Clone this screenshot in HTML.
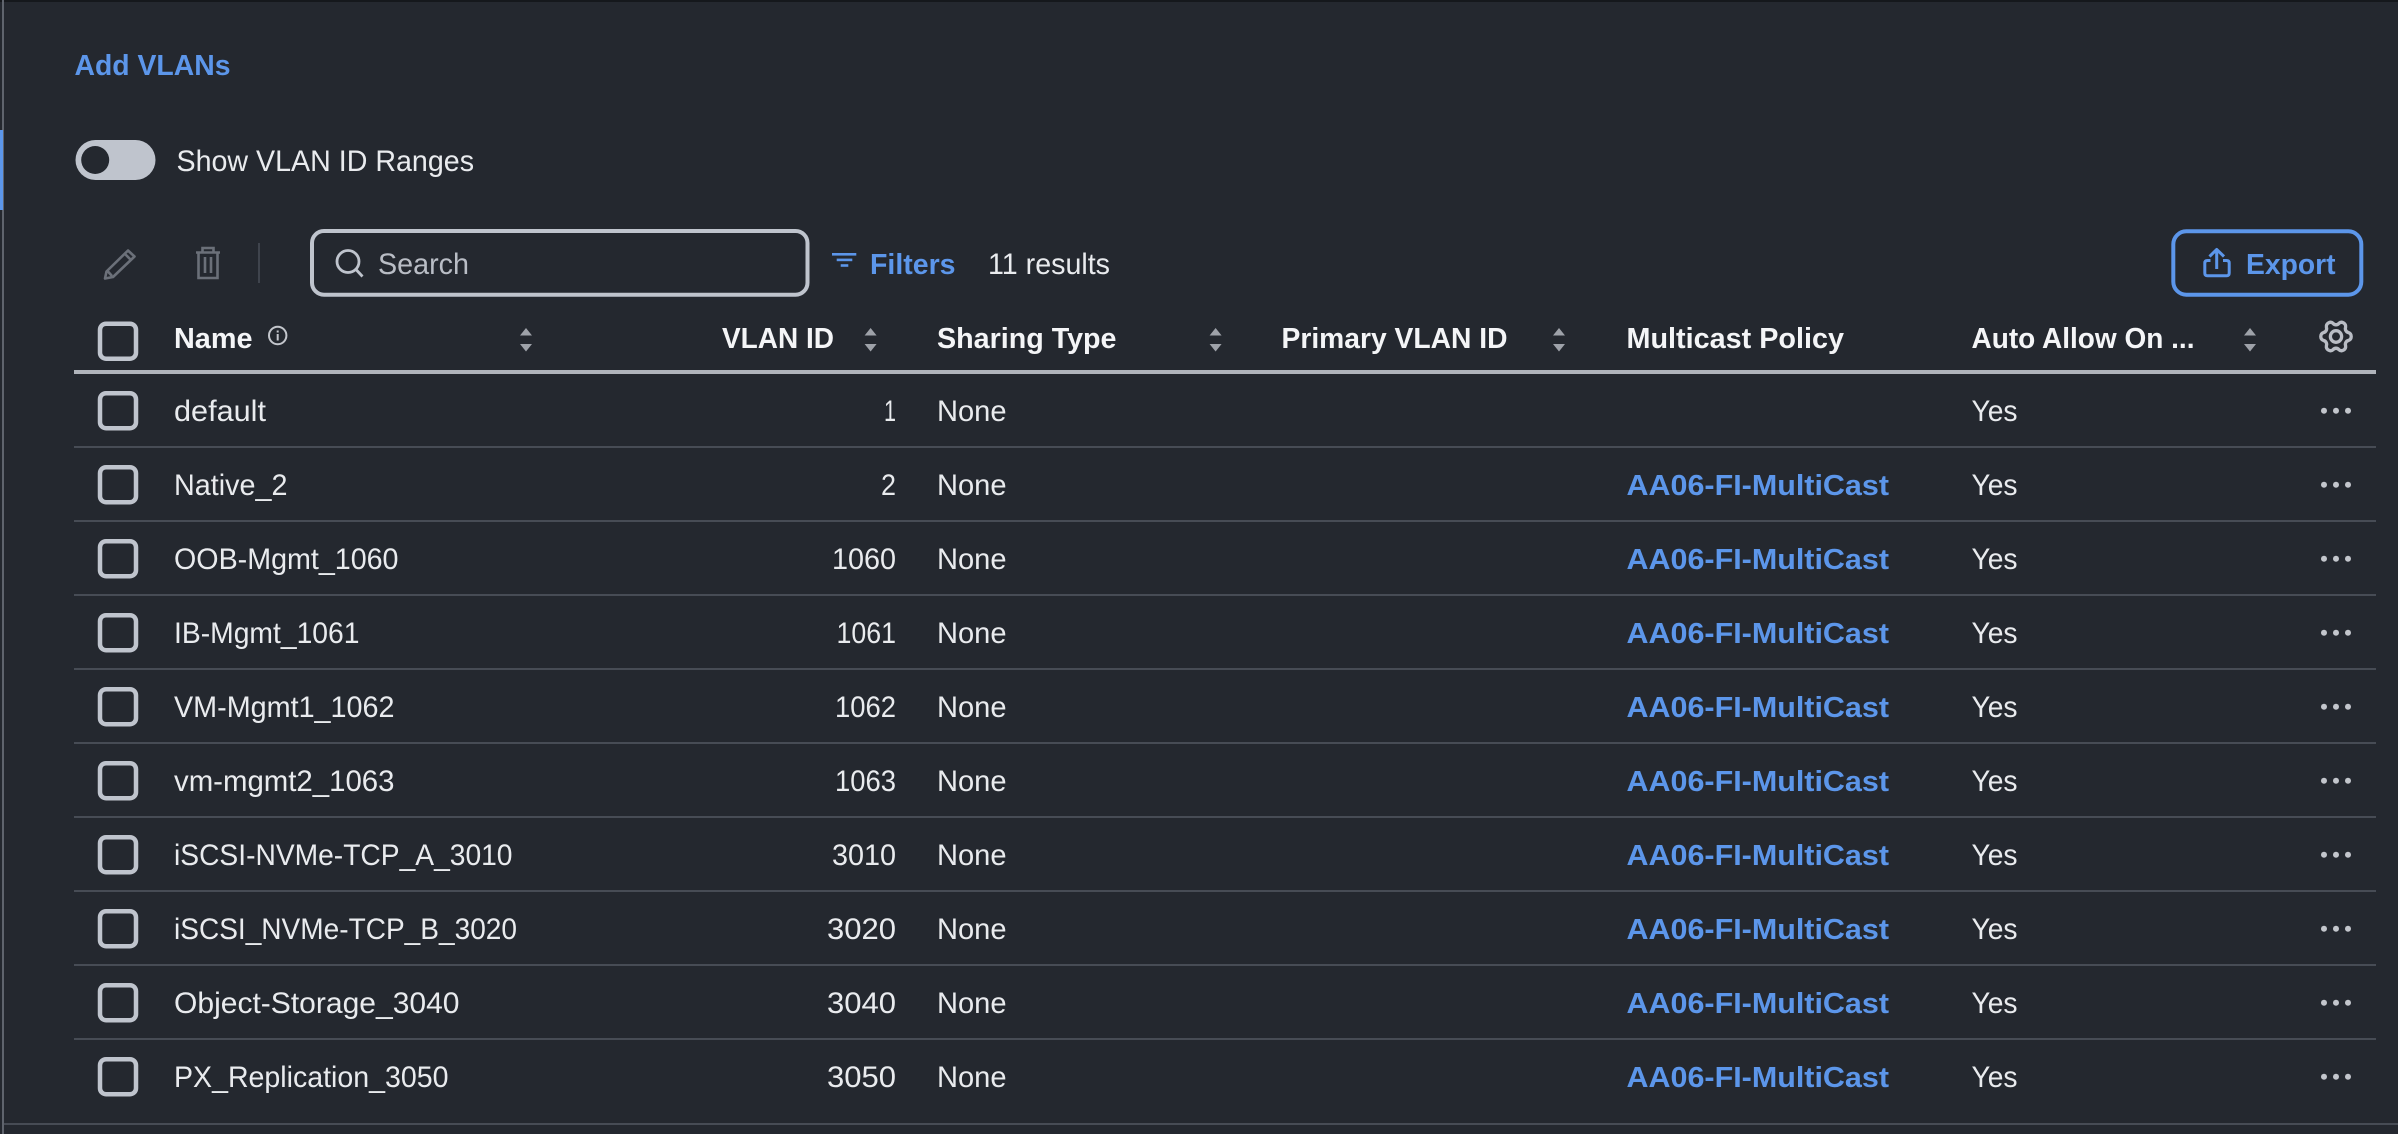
<!DOCTYPE html>
<html><head><meta charset="utf-8"><title>Add VLANs</title>
<style>
html,body{margin:0;padding:0;background:#24282f;width:2398px;height:1134px;overflow:hidden}
svg{display:block}
text{font-family:"Liberation Sans",sans-serif;white-space:pre}
.r{font-size:29.5px;fill:#e9ebee}
.h{font-size:29px;font-weight:700;fill:#f4f5f7}
.l{font-size:29px;font-weight:700;fill:#5c96ea}
.s{fill:#9ea2a9}
.c{fill:none;stroke:#bfc4cd;stroke-width:4.5px}
.sep{fill:#474c55}
</style></head><body>
<svg xmlns="http://www.w3.org/2000/svg" width="2398" height="1134" viewBox="0 0 2398 1134">
<defs>
<g id="sort"><path class="s" d="M-6 -1.5L0 -9L6 -1.5Z"/><path class="s" d="M-6 7L0 14.5L6 7Z"/></g>
<rect id="cb" class="c" x="-18" y="-17.5" width="36" height="35" rx="6"/>
<g id="dots"><circle cx="-12" cy="0" r="3" fill="#c3c6cc"/><circle cx="0" cy="0" r="3" fill="#c3c6cc"/><circle cx="12" cy="0" r="3" fill="#c3c6cc"/></g>
</defs>
<rect width="2398" height="1134" fill="#24282f"/>
<rect width="2398" height="2" fill="#15181c"/>
<rect x="2" y="0" width="2" height="1134" fill="#5f646d"/>
<rect x="0" y="130" width="3" height="80" fill="#5c96ea"/>
<rect x="4" y="1123" width="2394" height="2" fill="#474c55"/>

<text x="74.5" y="75" class="l" textLength="156" lengthAdjust="spacingAndGlyphs">Add VLANs</text>

<rect x="75.5" y="140" width="80" height="40" rx="20" fill="#bfc4cd"/>
<circle cx="95.2" cy="160" r="14" fill="#24282f"/>
<text x="176.5" y="171" class="r" textLength="297.5" lengthAdjust="spacingAndGlyphs">Show VLAN ID Ranges</text>

<!-- pencil -->
<g fill="none" stroke="#6b7079" stroke-width="2.6" stroke-linejoin="round">
<path d="M128 250.5L134.5 256.5L113 277L105 278.5L106.5 271.5Z"/>
<path d="M125 254L131 260M107.5 271L112 276"/>
</g>
<!-- trash -->
<g fill="none" stroke="#6b7079" stroke-width="2.6">
<path d="M196 252.5H220M202.5 252.5V248H213.5V252.5"/>
<path d="M198.5 253V278H217.5V253"/>
<path d="M205 257V273M211 257V273"/>
</g>
<rect x="258" y="243" width="2" height="40" fill="#3f444d"/>

<rect x="312" y="231" width="495.5" height="63.7" rx="12" fill="none" stroke="#bfc4cd" stroke-width="4"/>
<circle cx="348" cy="261.5" r="11" fill="none" stroke="#bfc4cd" stroke-width="2.8"/>
<path d="M356 269.5L362.5 276.5" stroke="#bfc4cd" stroke-width="2.8" fill="none"/>
<text x="378" y="274" font-size="29.5" fill="#b9bdc5" textLength="91" lengthAdjust="spacingAndGlyphs">Search</text>

<rect x="832" y="253" width="24.3" height="2.6" fill="#5c96ea"/>
<rect x="836.7" y="258.6" width="15.6" height="2.6" fill="#5c96ea"/>
<rect x="840.7" y="264.2" width="7.6" height="2.6" fill="#5c96ea"/>
<text x="870" y="274" class="l" textLength="85.5" lengthAdjust="spacingAndGlyphs">Filters</text>
<text x="988" y="274" class="r" textLength="122" lengthAdjust="spacingAndGlyphs">11 results</text>

<rect x="2173.3" y="231.3" width="188" height="63.4" rx="13" fill="none" stroke="#5c96ea" stroke-width="4"/>
<g fill="none" stroke="#5c96ea" stroke-width="3" stroke-linejoin="round">
<path d="M2210.5 260.5H2207.5Q2204.8 260.5 2204.8 263V273Q2204.8 275.8 2207.5 275.8H2226.5Q2229.2 275.8 2229.2 273V263Q2229.2 260.5 2226.5 260.5H2223"/>
<path d="M2216.7 269V250M2209.5 256.5L2216.7 249.5L2224 256.5"/>
</g>
<text x="2246" y="274" class="l" textLength="89.5" lengthAdjust="spacingAndGlyphs">Export</text>

<!-- header -->
<use href="#cb" x="118" y="341.2"/>
<text x="174" y="348" class="h" textLength="78.5" lengthAdjust="spacingAndGlyphs">Name</text>
<circle cx="277.7" cy="335.5" r="8.7" fill="none" stroke="#c3c6cc" stroke-width="2"/>
<rect x="276.7" y="334" width="2" height="6.5" fill="#c3c6cc"/><rect x="276.7" y="330.5" width="2" height="2" fill="#c3c6cc"/>
<use href="#sort" x="526" y="337"/>
<text x="722" y="348" class="h" textLength="112" lengthAdjust="spacingAndGlyphs">VLAN ID</text>
<use href="#sort" x="870.6" y="337"/>
<text x="937" y="348" class="h" textLength="179.5" lengthAdjust="spacingAndGlyphs">Sharing Type</text>
<use href="#sort" x="1215.6" y="337"/>
<text x="1281.5" y="348" class="h" textLength="226" lengthAdjust="spacingAndGlyphs">Primary VLAN ID</text>
<use href="#sort" x="1559" y="337"/>
<text x="1626.5" y="348" class="h" textLength="217.5" lengthAdjust="spacingAndGlyphs">Multicast Policy</text>
<text x="1971.5" y="348" class="h" textLength="223" lengthAdjust="spacingAndGlyphs">Auto Allow On ...</text>
<use href="#sort" x="2250" y="337"/>
<g transform="translate(2336 336.5) scale(.97 1)" fill="none" stroke="#b9bdc5" stroke-width="3.4">
<path d="M12.91,-3.95 A4.2,4.2 0 0 1 12.91,3.95 A4,4 0 0 0 9.87,9.21 A4.2,4.2 0 0 1 3.04,13.15 A4,4 0 0 0 -3.04,13.15 A4.2,4.2 0 0 1 -9.87,9.21 A4,4 0 0 0 -12.91,3.95 A4.2,4.2 0 0 1 -12.91,-3.95 A4,4 0 0 0 -9.87,-9.21 A4.2,4.2 0 0 1 -3.04,-13.15 A4,4 0 0 0 3.04,-13.15 A4.2,4.2 0 0 1 9.87,-9.21 A4,4 0 0 0 12.91,-3.95Z"/>
<circle cx="0" cy="0" r="5.8"/>
</g>
<rect x="74" y="370" width="2302" height="4" fill="#b0b4bb"/>

<!-- row 1 -->
<g transform="translate(0 0)">
<use href="#cb" x="118" y="410.7"/>
<text x="174" y="421" class="r" textLength="92" lengthAdjust="spacingAndGlyphs">default</text>
<text x="884" y="421" class="r" textLength="12" lengthAdjust="spacingAndGlyphs">1</text>
<text x="937" y="421" class="r" textLength="69.5" lengthAdjust="spacingAndGlyphs">None</text>
<text x="1971.5" y="421" class="r" textLength="46" lengthAdjust="spacingAndGlyphs">Yes</text>
<use href="#dots" x="2336" y="410.7"/>
<rect class="sep" x="74" y="446" width="2302" height="2"/>
</g>
<!-- row 2 -->
<g transform="translate(0 74)">
<use href="#cb" x="118" y="410.7"/>
<text x="174" y="421" class="r" textLength="113.5" lengthAdjust="spacingAndGlyphs">Native_2</text>
<text x="881" y="421" class="r" textLength="15" lengthAdjust="spacingAndGlyphs">2</text>
<text x="937" y="421" class="r" textLength="69.5" lengthAdjust="spacingAndGlyphs">None</text>
<text x="1626.5" y="421" class="l" textLength="262.5" lengthAdjust="spacingAndGlyphs">AA06-FI-MultiCast</text>
<text x="1971.5" y="421" class="r" textLength="46" lengthAdjust="spacingAndGlyphs">Yes</text>
<use href="#dots" x="2336" y="410.7"/>
<rect class="sep" x="74" y="446" width="2302" height="2"/>
</g>
<!-- row 3 -->
<g transform="translate(0 148)">
<use href="#cb" x="118" y="410.7"/>
<text x="174" y="421" class="r" textLength="224.5" lengthAdjust="spacingAndGlyphs">OOB-Mgmt_1060</text>
<text x="832" y="421" class="r" textLength="64" lengthAdjust="spacingAndGlyphs">1060</text>
<text x="937" y="421" class="r" textLength="69.5" lengthAdjust="spacingAndGlyphs">None</text>
<text x="1626.5" y="421" class="l" textLength="262.5" lengthAdjust="spacingAndGlyphs">AA06-FI-MultiCast</text>
<text x="1971.5" y="421" class="r" textLength="46" lengthAdjust="spacingAndGlyphs">Yes</text>
<use href="#dots" x="2336" y="410.7"/>
<rect class="sep" x="74" y="446" width="2302" height="2"/>
</g>
<!-- row 4 -->
<g transform="translate(0 222)">
<use href="#cb" x="118" y="410.7"/>
<text x="174" y="421" class="r" textLength="185.5" lengthAdjust="spacingAndGlyphs">IB-Mgmt_1061</text>
<text x="836.5" y="421" class="r" textLength="59.5" lengthAdjust="spacingAndGlyphs">1061</text>
<text x="937" y="421" class="r" textLength="69.5" lengthAdjust="spacingAndGlyphs">None</text>
<text x="1626.5" y="421" class="l" textLength="262.5" lengthAdjust="spacingAndGlyphs">AA06-FI-MultiCast</text>
<text x="1971.5" y="421" class="r" textLength="46" lengthAdjust="spacingAndGlyphs">Yes</text>
<use href="#dots" x="2336" y="410.7"/>
<rect class="sep" x="74" y="446" width="2302" height="2"/>
</g>
<!-- row 5 -->
<g transform="translate(0 296)">
<use href="#cb" x="118" y="410.7"/>
<text x="174" y="421" class="r" textLength="220.5" lengthAdjust="spacingAndGlyphs">VM-Mgmt1_1062</text>
<text x="835" y="421" class="r" textLength="61" lengthAdjust="spacingAndGlyphs">1062</text>
<text x="937" y="421" class="r" textLength="69.5" lengthAdjust="spacingAndGlyphs">None</text>
<text x="1626.5" y="421" class="l" textLength="262.5" lengthAdjust="spacingAndGlyphs">AA06-FI-MultiCast</text>
<text x="1971.5" y="421" class="r" textLength="46" lengthAdjust="spacingAndGlyphs">Yes</text>
<use href="#dots" x="2336" y="410.7"/>
<rect class="sep" x="74" y="446" width="2302" height="2"/>
</g>
<!-- row 6 -->
<g transform="translate(0 370)">
<use href="#cb" x="118" y="410.7"/>
<text x="174" y="421" class="r" textLength="220.5" lengthAdjust="spacingAndGlyphs">vm-mgmt2_1063</text>
<text x="835" y="421" class="r" textLength="61" lengthAdjust="spacingAndGlyphs">1063</text>
<text x="937" y="421" class="r" textLength="69.5" lengthAdjust="spacingAndGlyphs">None</text>
<text x="1626.5" y="421" class="l" textLength="262.5" lengthAdjust="spacingAndGlyphs">AA06-FI-MultiCast</text>
<text x="1971.5" y="421" class="r" textLength="46" lengthAdjust="spacingAndGlyphs">Yes</text>
<use href="#dots" x="2336" y="410.7"/>
<rect class="sep" x="74" y="446" width="2302" height="2"/>
</g>
<!-- row 7 -->
<g transform="translate(0 444)">
<use href="#cb" x="118" y="410.7"/>
<text x="174" y="421" class="r" textLength="338.5" lengthAdjust="spacingAndGlyphs">iSCSI-NVMe-TCP_A_3010</text>
<text x="832" y="421" class="r" textLength="64" lengthAdjust="spacingAndGlyphs">3010</text>
<text x="937" y="421" class="r" textLength="69.5" lengthAdjust="spacingAndGlyphs">None</text>
<text x="1626.5" y="421" class="l" textLength="262.5" lengthAdjust="spacingAndGlyphs">AA06-FI-MultiCast</text>
<text x="1971.5" y="421" class="r" textLength="46" lengthAdjust="spacingAndGlyphs">Yes</text>
<use href="#dots" x="2336" y="410.7"/>
<rect class="sep" x="74" y="446" width="2302" height="2"/>
</g>
<!-- row 8 -->
<g transform="translate(0 518)">
<use href="#cb" x="118" y="410.7"/>
<text x="174" y="421" class="r" textLength="343" lengthAdjust="spacingAndGlyphs">iSCSI_NVMe-TCP_B_3020</text>
<text x="827" y="421" class="r" textLength="69" lengthAdjust="spacingAndGlyphs">3020</text>
<text x="937" y="421" class="r" textLength="69.5" lengthAdjust="spacingAndGlyphs">None</text>
<text x="1626.5" y="421" class="l" textLength="262.5" lengthAdjust="spacingAndGlyphs">AA06-FI-MultiCast</text>
<text x="1971.5" y="421" class="r" textLength="46" lengthAdjust="spacingAndGlyphs">Yes</text>
<use href="#dots" x="2336" y="410.7"/>
<rect class="sep" x="74" y="446" width="2302" height="2"/>
</g>
<!-- row 9 -->
<g transform="translate(0 592)">
<use href="#cb" x="118" y="410.7"/>
<text x="174" y="421" class="r" textLength="285.5" lengthAdjust="spacingAndGlyphs">Object-Storage_3040</text>
<text x="827" y="421" class="r" textLength="69" lengthAdjust="spacingAndGlyphs">3040</text>
<text x="937" y="421" class="r" textLength="69.5" lengthAdjust="spacingAndGlyphs">None</text>
<text x="1626.5" y="421" class="l" textLength="262.5" lengthAdjust="spacingAndGlyphs">AA06-FI-MultiCast</text>
<text x="1971.5" y="421" class="r" textLength="46" lengthAdjust="spacingAndGlyphs">Yes</text>
<use href="#dots" x="2336" y="410.7"/>
<rect class="sep" x="74" y="446" width="2302" height="2"/>
</g>
<!-- row 10 -->
<g transform="translate(0 666)">
<use href="#cb" x="118" y="410.7"/>
<text x="174" y="421" class="r" textLength="274.5" lengthAdjust="spacingAndGlyphs">PX_Replication_3050</text>
<text x="827" y="421" class="r" textLength="69" lengthAdjust="spacingAndGlyphs">3050</text>
<text x="937" y="421" class="r" textLength="69.5" lengthAdjust="spacingAndGlyphs">None</text>
<text x="1626.5" y="421" class="l" textLength="262.5" lengthAdjust="spacingAndGlyphs">AA06-FI-MultiCast</text>
<text x="1971.5" y="421" class="r" textLength="46" lengthAdjust="spacingAndGlyphs">Yes</text>
<use href="#dots" x="2336" y="410.7"/>
</g>
</svg>
</body></html>
